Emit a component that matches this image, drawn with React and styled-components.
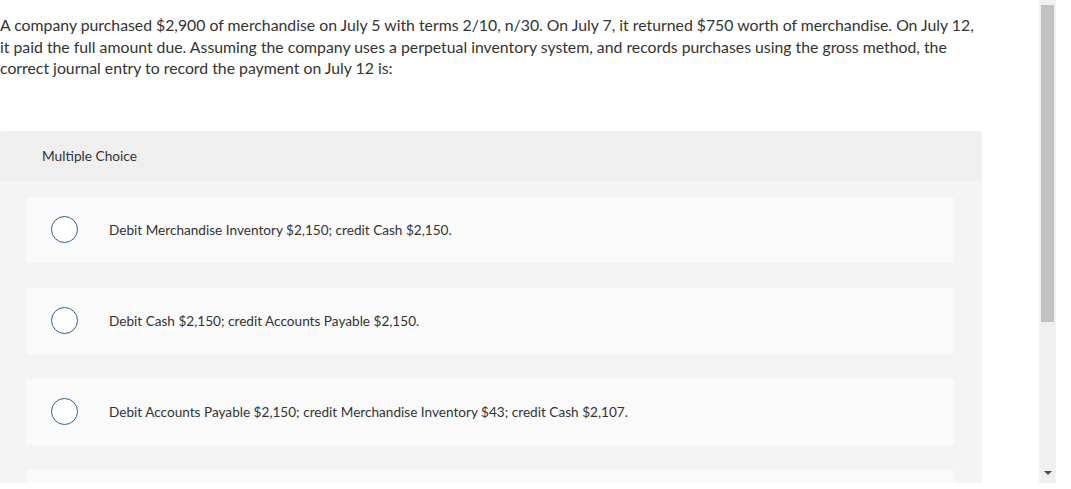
import React from "react";
import styled, { createGlobalStyle } from "styled-components";

const GlobalStyle = createGlobalStyle`
  html, body {
    margin: 0;
    padding: 0;
    background: #fff;
  }
  body {
    font-family: Lato, "Open Sans", sans-serif;
    color: #333;
  }
`;

const Screen = styled.div`
  display: flex;
  height: 483px;
  overflow: hidden;
`;

const Content = styled.div`
  flex: 1;
  min-width: 0;
`;

const Question = styled.p`
  margin: 0;
  padding-top: 14px;
  width: 1000px;
  font-size: 15.8px;
  line-height: 21.5px;
  white-space: nowrap;
`;

const Panel = styled.section`
  margin-top: 52px;
  width: 982px;
  border-radius: 3px 3px 0 0;
  background: #f4f4f4;
  overflow: hidden;
  min-height: 360px;
`;

const PanelHeader = styled.div`
  height: 50px;
  display: flex;
  align-items: center;
  padding-left: 42px;
  background: #efefef;
  font-size: 13.7px;
`;

const Choices = styled.div`
  display: flex;
  flex-direction: column;
  gap: 25px;
  padding: 16px 28px 0 26px;
`;

const Choice = styled.label`
  display: flex;
  align-items: center;
  height: 66px;
  background: #fafafa;
  border-radius: 3px;
  padding-left: 25px;
  font-size: 13.6px;
  cursor: pointer;
`;

const Radio = styled.span`
  flex: none;
  width: 25px;
  height: 25px;
  border: 1.5px solid #2e5f90;
  border-radius: 50%;
  background: #fff;
  margin-right: 31px;
`;

const Scrollbar = styled.div`
  flex: none;
  width: 17px;
  background: #f0f0f0;
  position: relative;
  margin-right: 15px;
`;

const Thumb = styled.div`
  position: absolute;
  left: 2px;
  right: 2px;
  top: 5px;
  height: 317px;
  background: #c1c1c1;
`;

const ArrowDown = styled.div`
  position: absolute;
  left: 5px;
  bottom: 8px;
  width: 0;
  height: 0;
  border-left: 4px solid transparent;
  border-right: 4px solid transparent;
  border-top: 4px solid #505050;
`;

const choices = [
  "Debit Merchandise Inventory $2,150; credit Cash $2,150.",
  "Debit Cash $2,150; credit Accounts Payable $2,150.",
  "Debit Accounts Payable $2,150; credit Merchandise Inventory $43; credit Cash $2,107.",
  "",
];

const App = () => {
  return (
    <>
      <GlobalStyle />
      <Screen>
        <Content>
          <Question>
            A company purchased $2,900 of merchandise on July 5 with terms 2/10, n/30. On July 7, it returned $750 worth of merchandise. On July 12,
            <br />
            it paid the full amount due. Assuming the company uses a perpetual inventory system, and records purchases using the gross method, the
            <br />
            correct journal entry to record the payment on July 12 is:
          </Question>
          <Panel>
            <PanelHeader>Multiple Choice</PanelHeader>
            <Choices>
              {choices.map((text, i) => (
                <Choice key={i}>
                  <Radio />
                  {text}
                </Choice>
              ))}
            </Choices>
          </Panel>
        </Content>
        <Scrollbar>
          <Thumb />
          <ArrowDown />
        </Scrollbar>
      </Screen>
    </>
  );
};

export default App;
